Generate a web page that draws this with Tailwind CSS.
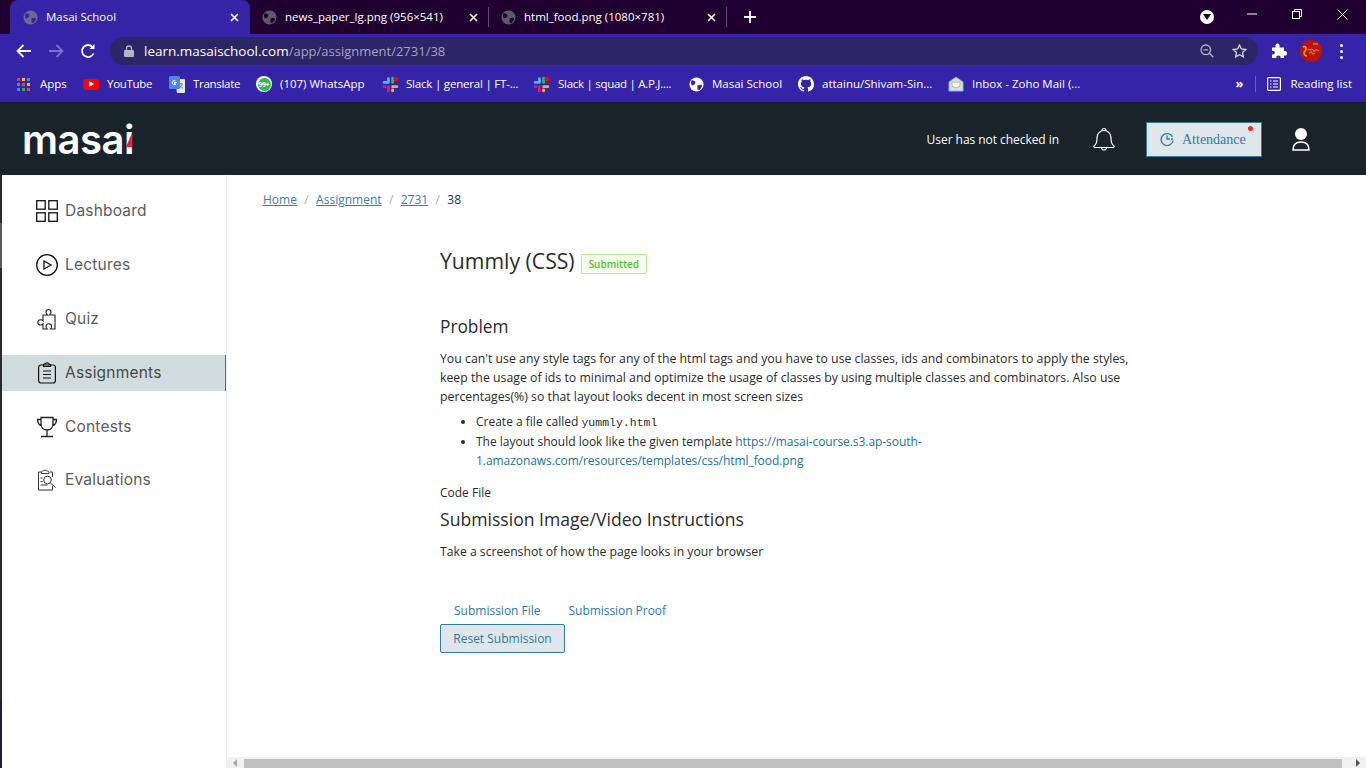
<!DOCTYPE html>
<html lang="en">
<head>
    <meta charset="UTF-8">
    <title>Masai School</title>
    <script src="https://cdn.jsdelivr.net/npm/@tailwindcss/browser@4"></script>
</head>
<body class="w-[1366px] h-[768px] overflow-hidden bg-white font-['Open_Sans',sans-serif]">
    <!-- tab strip -->
    <div class="h-[34px] bg-[#1f0030] flex items-end pl-[10px] text-white text-[11.5px]">
        <div class="w-[240px] h-[34px] bg-[#3624a8] rounded-t-[8px] flex items-center pl-[13px] pr-[11px]">
            <svg class="w-[15px] h-[15px] shrink-0" viewBox="0 0 16 16"><circle cx="8" cy="8" r="7.5" fill="#6f6a8f"/><path d="M3 3l4 2-1 3-3 1-1-3zM9 9l4-1 1 2-3 4-2-1z" fill="#3624a8"/></svg>
            <span class="ml-[8px] flex-1">Masai School</span>
            <svg class="w-[9px] h-[9px]" viewBox="0 0 9 9"><path d="M1 1l7 7M8 1L1 8" stroke="#fff" stroke-width="1.6"/></svg>
        </div>
        <div class="w-[239px] h-[34px] flex items-center pl-[12px] pr-[11px] relative">
            <svg class="w-[15px] h-[15px] shrink-0" viewBox="0 0 16 16"><circle cx="8" cy="8" r="7.5" fill="#5f5a68"/><path d="M3 3l4 2-1 3-3 1-1-3zM9 9l4-1 1 2-3 4-2-1z" fill="#1f0030"/></svg>
            <span class="ml-[8px] flex-1">news_paper_lg.png (956×541)</span>
            <svg class="w-[9px] h-[9px]" viewBox="0 0 9 9"><path d="M1 1l7 7M8 1L1 8" stroke="#fff" stroke-width="1.6"/></svg>
            <div class="absolute right-0 top-[7px] w-px h-[20px] bg-[#5d4f6b]"></div>
        </div>
        <div class="w-[238px] h-[34px] flex items-center pl-[12px] pr-[11px] relative">
            <svg class="w-[15px] h-[15px] shrink-0" viewBox="0 0 16 16"><circle cx="8" cy="8" r="7.5" fill="#5f5a68"/><path d="M3 3l4 2-1 3-3 1-1-3zM9 9l4-1 1 2-3 4-2-1z" fill="#1f0030"/></svg>
            <span class="ml-[8px] flex-1">html_food.png (1080×781)</span>
            <svg class="w-[9px] h-[9px]" viewBox="0 0 9 9"><path d="M1 1l7 7M8 1L1 8" stroke="#fff" stroke-width="1.6"/></svg>
            <div class="absolute right-0 top-[7px] w-px h-[20px] bg-[#5d4f6b]"></div>
        </div>
        <svg class="w-[12px] h-[12px] ml-[17px] mb-[11px]" viewBox="0 0 12 12"><path d="M6 0v12M0 6h12" stroke="#fff" stroke-width="1.8"/></svg>
        <div class="ml-auto flex items-center h-[34px]">
            <div class="w-[14px] h-[14px] rounded-full bg-white flex items-center justify-center">
                <svg class="w-[8px] h-[6px]" viewBox="0 0 8 6"><path d="M0 0h8L4 6z" fill="#1f0030"/></svg>
            </div>
            <svg class="w-[10px] h-[2px] ml-[33px] mb-[6px]" viewBox="0 0 10 2"><path d="M0 1h10" stroke="#fff"/></svg>
            <svg class="w-[10px] h-[10px] ml-[35px] mb-[6px]" viewBox="0 0 10 10" fill="none" stroke="#fff"><rect x=".5" y="2.5" width="7" height="7"/><path d="M2.500 2.500V.5h7v7H7.500"/></svg>
            <svg class="w-[11px] h-[11px] ml-[35px] mr-[18px] mb-[6px]" viewBox="0 0 11 11"><path d="M.5.5l10 10M10.500.5l-10 10" stroke="#fff"/></svg>
        </div>
    </div>

    <!-- toolbar -->
    <div class="h-[34px] bg-[#3624a8] flex items-center text-white">
        <svg class="w-[16px] h-[14px] ml-[16px]" viewBox="0 0 16 14" fill="none" stroke="#fff" stroke-width="1.8"><path d="M15 7H2M7.500 1L1.500 7l6 6"/></svg>
        <svg class="w-[16px] h-[14px] ml-[16px]" viewBox="0 0 16 14" fill="none" stroke="#7d72c8" stroke-width="1.8"><path d="M1 7h13M8.500 1l6 6-6 6"/></svg>
        <svg class="w-[16px] h-[16px] ml-[16px]" viewBox="0 0 16 16" fill="none" stroke="#fff" stroke-width="1.8"><path d="M13.500 10.500A6 6 0 1 1 12.500 4"/><path d="M14.500 1v5h-5" fill="#fff" stroke="none"/></svg>
        <div class="ml-[14px] w-[1148px] h-[28px] rounded-full bg-[#2c2566] flex items-center pl-[14px] pr-[11px] text-[13.5px]">
            <svg class="w-[10px] h-[12px]" viewBox="0 0 10 12"><path d="M2.500 5V3.500a2.500 2.500 0 0 1 5 0V5" fill="none" stroke="#b5b2c9" stroke-width="1.3"/><rect y="5" width="10" height="7" rx="1" fill="#b5b2c9"/></svg>
            <span class="ml-[10px] flex-1">learn.masaischool.com<span class="text-[#a8a4c0] text-[13px]">/app/assignment/2731/38</span></span>
            <svg class="w-[14px] h-[14px]" viewBox="0 0 14 14" fill="none" stroke="#b5b2c9" stroke-width="1.3"><circle cx="5.800" cy="5.800" r="4.800"/><path d="M9.300 9.300l4 4M3.500 5.800h4.600"/></svg>
            <svg class="w-[15px] h-[14px] ml-[18px]" viewBox="0 0 15 14" fill="none" stroke="#d5d3e3" stroke-width="1.3"><path d="M7.500 1l1.900 4 4.400.5-3.300 3 .9 4.400-3.900-2.200-3.900 2.200.9-4.400-3.300-3L5.600 5z"/></svg>
        </div>
        <svg class="w-[16px] h-[16px] ml-[13px]" viewBox="0 0 16 16" fill="#fff"><path d="M1 4.500h3.500C4 1.500 5 .5 6.500.5S9 1.500 8.500 4.500H13V8c2.500-.5 3 .8 3 2.200s-.5 2.800-3 2.300V15H9.500c.5-2-.7-2.600-2-2.600s-2.500.6-2 2.600H1v-3.500c2 .5 2.700-.6 2.700-1.800S3 7.500 1 8z"/></svg>
        <svg class="w-[22px] h-[22px] ml-[13px]" viewBox="0 0 22 22"><circle cx="11" cy="11" r="11" fill="#b81408"/><path d="M3 7c2-1 3 0 3 2s-2 2-2 4 2 3 3 3" fill="none" stroke="#e8a11f" stroke-width="1.600"/><path d="M8 9l2 1 2-1 2 2 3-1 2 1M9 13l2-1 2 2 2-1" fill="none" stroke="#e0772c" stroke-width="1.300"/><path d="M13 4h5" stroke="#d8b04a" stroke-width="1"/></svg>
        <div class="ml-[18px] flex flex-col gap-[3px]">
            <div class="w-[3px] h-[3px] rounded-full bg-white"></div>
            <div class="w-[3px] h-[3px] rounded-full bg-white"></div>
            <div class="w-[3px] h-[3px] rounded-full bg-white"></div>
        </div>
    </div>

    <!-- bookmarks -->
    <div class="h-[34px] pb-[2px] bg-[#3624a8] flex items-center text-white text-[11.5px] pl-[17px] whitespace-nowrap">
        <div class="w-[13px] shrink-0 grid grid-cols-3 gap-[2px]">
            <i class="h-[3px] bg-[#ea4335]"></i><i class="h-[3px] bg-[#fbbc05]"></i><i class="h-[3px] bg-[#4285f4]"></i>
            <i class="h-[3px] bg-[#34a853]"></i><i class="h-[3px] bg-[#ea4335]"></i><i class="h-[3px] bg-[#fbbc05]"></i>
            <i class="h-[3px] bg-[#4285f4]"></i><i class="h-[3px] bg-[#34a853]"></i><i class="h-[3px] bg-[#ea4335]"></i>
        </div>
        <span class="ml-[10px] w-[43px]">Apps</span>
        <div class="w-[16px] h-[11px] shrink-0 rounded-[3px] bg-[#f00] flex items-center justify-center"><div class="w-0 h-0 border-y-[3px] border-y-transparent border-l-[5px] border-l-white"></div></div>
        <span class="ml-[8px] w-[62px] tracking-[-0.3px]">YouTube</span>
        <svg class="w-[16px] h-[17px] shrink-0" viewBox="0 0 16 17"><path d="M6 3h9a1 1 0 0 1 1 1v12a1 1 0 0 1-1 1H8z" fill="#e6e6e6"/><rect width="11" height="13" rx="1.500" fill="#4f86ec"/><path d="M8 6.500H5.500v1.300H7A2 2 0 1 1 6.500 5" fill="none" stroke="#fff" stroke-width="1"/><path d="M10 8h4M12 7v1M13 8c-.3 2-1.500 3.500-3 4M11 9.500c.5 1 1.500 2 3 2.500" fill="none" stroke="#7a7a7a" stroke-width=".9"/></svg>
        <span class="ml-[8px] w-[63px] tracking-[-0.3px]">Translate</span>
        <div class="relative w-[16px] h-[16px] shrink-0 rounded-full bg-white flex items-center justify-center">
            <div class="w-[13px] h-[13px] rounded-full bg-[#2eb84c] text-white text-[6.5px] font-bold leading-[13px] text-center">99+</div>
        </div>
        <span class="ml-[8px] w-[102px]">(107) WhatsApp</span>
        <svg class="w-[17px] h-[17px] shrink-0" viewBox="0 0 16 16" fill="none" stroke-width="2.600" stroke-linecap="round"><path d="M6 2.500v3.500M2 6h4" stroke="#36c5f0"/><path d="M10 2v4" stroke="#2eb67d"/><path d="M14 10h-4" stroke="#ecb22e"/><path d="M10 14v-1" stroke="#ecb22e"/><path d="M6 10v4M2 10h1" stroke="#e01e5a"/><circle cx="13" cy="3" r="2.200" fill="#f00" stroke="none"/></svg>
        <span class="ml-[7px] w-[127px] tracking-[-0.2px]">Slack | general | FT-...</span>
        <svg class="w-[17px] h-[17px] shrink-0" viewBox="0 0 16 16" fill="none" stroke-width="2.600" stroke-linecap="round"><path d="M6 2.500v3.500M2 6h4" stroke="#36c5f0"/><path d="M10 2v4" stroke="#2eb67d"/><path d="M14 10h-4" stroke="#ecb22e"/><path d="M10 14v-1" stroke="#ecb22e"/><path d="M6 10v4M2 10h1" stroke="#e01e5a"/><circle cx="13" cy="3" r="2.200" fill="#f00" stroke="none"/></svg>
        <span class="ml-[8px] w-[131px] tracking-[-0.28px]">Slack | squad | A.P.J....</span>
        <svg class="w-[15px] h-[15px] shrink-0" viewBox="0 0 16 16"><circle cx="8" cy="8" r="7.500" fill="#fff"/><path d="M3 3l4 2-1 3-3 1-1-3zM9 9l4-1 1 2-3 4-2-1z" fill="#3624a8"/></svg>
        <span class="ml-[8px] w-[86px]">Masai School</span>
        <svg class="w-[16px] h-[16px] shrink-0" viewBox="0 0 16 16" fill="#fff"><path d="M8 0C3.580 0 0 3.580 0 8c0 3.540 2.290 6.530 5.470 7.590.4.070.55-.17.55-.38 0-.19-.01-.82-.01-1.490-2.010.37-2.530-.49-2.690-.94-.09-.23-.48-.94-.82-1.130-.28-.15-.68-.52-.01-.53.63-.01 1.080.58 1.230.82.72 1.210 1.870.87 2.330.66.070-.52.28-.87.51-1.070-1.780-.2-3.640-.89-3.640-3.950 0-.87.31-1.590.82-2.150-.08-.2-.36-1.020.08-2.120 0 0 .67-.21 2.200.82.64-.18 1.320-.27 2-.27s1.360.09 2 .27c1.530-1.040 2.200-.82 2.200-.82.44 1.100.16 1.920.08 2.120.51.56.82 1.270.82 2.150 0 3.070-1.870 3.750-3.650 3.950.29.25.54.73.54 1.480 0 1.070-.01 1.930-.01 2.200 0 .21.15.46.55.38A8.010 8.010 0 0 0 16 8c0-4.420-3.580-8-8-8z"/></svg>
        <span class="ml-[8px] w-[126px]">attainu/Shivam-Sin...</span>
        <svg class="w-[16px] h-[16px] shrink-0" viewBox="0 0 16 16"><path d="M1 6l7-5 7 5v9H1z" fill="#cfe4f5" stroke="#7fb3dc"/><path d="M4 6h8v4l-4 2-4-2z" fill="#fff" stroke="#f0a63c"/></svg>
        <span class="ml-[8px]">Inbox - Zoho Mail (...</span>
        <span class="ml-auto text-[13px] font-bold leading-none mb-[2px]">»</span>
        <div class="w-px h-[16px] bg-[#6a5cc0] ml-[12px]"></div>
        <svg class="w-[14px] h-[14px] ml-[11px]" viewBox="0 0 14 14" fill="none" stroke="#fff" stroke-width="1.200"><rect x=".6" y=".6" width="12.800" height="12.800" rx="1"/><path d="M3 4h1.500M6 4h5M3 7h1.500M6 7h5M3 10h1.500M6 10h5"/></svg>
        <span class="ml-[9px] mr-[14px]">Reading list</span>
    </div>

    <div class="h-px bg-[#1d1a3a]"></div>

    <!-- site header -->
    <header class="h-[72px] bg-[#18232a] flex items-center pl-[22px] text-white">
        <div class="relative font-['Inter',sans-serif] font-semibold text-[40px] leading-none tracking-[-0.5px] mt-[2px]">masai<span class="absolute right-[2px] bottom-[5px] w-[6px] h-[22px] bg-[#e8222e] [clip-path:polygon(100%_0,100%_65%,0_65%)]"></span></div>
        <span class="ml-auto mt-[1px] text-[12px] tracking-[-0.05px]">User has not checked in</span>
        <svg class="w-[24px] h-[25px] ml-[33px]" viewBox="0 0 24 25" fill="none" stroke="#fff" stroke-width="1.200"><path d="M2 19c2-2 3-3 3-8 0-4.500 3-7.500 7-7.500s7 3 7 7.500c0 5 1 6 3 8 .5 1-.2 1.500-1 1.500H3c-.8 0-1.500-.5-1-1.500z"/><path d="M10 3.500a2 2 0 0 1 4 0M9.500 20.500a2.500 2.500 0 0 0 5 0"/></svg>
        <div class="relative ml-[30px] w-[116px] h-[35px] bg-[#dfe7ed] border border-[#337ba5] flex items-center pl-[13px] font-['Liberation_Serif',serif] text-[14px] text-[#2f7aa5]">
            <svg class="w-[14px] h-[14px]" viewBox="0 0 14 14" fill="none" stroke="#2f7aa5" stroke-width="1.300"><path d="M12.500 5A6 6 0 1 0 13 8.500M7 3.500V7h3M11 7h2"/></svg>
            <span class="ml-[8px]">Attendance</span>
            <div class="absolute top-[3px] right-[8px] w-[5px] h-[5px] rounded-full bg-[#e8262e]"></div>
        </div>
        <svg class="w-[18px] h-[23px] ml-[30px]" viewBox="0 0 18 23"><circle cx="9" cy="6" r="6" fill="#fff"/><path d="M1 22c0-5 3-8 8-8s8 3 8 8z" fill="none" stroke="#fff" stroke-width="1.500"/></svg>
        <div class="w-[56px]"></div>
    </header>

    <div class="relative h-[593px] flex">
        <!-- window edge showing through on the left -->
        <div class="w-[2px] flex flex-col">
            <div class="h-[48px] bg-[#2b2b2e]"></div>
            <div class="h-[45px] bg-[#5c5c5c]"></div>
            <div class="h-[432px] bg-[#2b2b2e]"></div>
            <div class="flex-1 bg-[#1f1c3d]"></div>
        </div>

        <!-- sidebar -->
        <aside class="w-[225px] border-r border-[#eceef5] pt-[18px] font-['Inter',sans-serif] text-[15.500px] text-[#5c5c5c] tracking-[0.2px]">
            <div class="h-[36px] flex items-center pl-[34px] gap-[7px]">
                <svg class="w-[22px] h-[22px]" viewBox="0 0 22 22" fill="none" stroke="#111" stroke-width="1.300"><rect x=".7" y=".7" width="8.500" height="8.500"/><rect x="12.800" y=".7" width="8.500" height="8.500"/><rect x=".7" y="12.800" width="8.500" height="8.500"/><rect x="12.800" y="12.800" width="8.500" height="8.500"/></svg>
                <span>Dashboard</span>
            </div>
            <div class="mt-[18px] h-[36px] flex items-center pl-[34px] gap-[7px]">
                <svg class="w-[22px] h-[22px]" viewBox="0 0 22 22" fill="none" stroke="#111" stroke-width="1.300"><circle cx="11" cy="11" r="10.300"/><path d="M8 7l7 4-7 4z"/></svg>
                <span>Lectures</span>
            </div>
            <div class="mt-[18px] h-[36px] flex items-center pl-[34px] gap-[7px]">
                <svg class="w-[22px] h-[22px]" viewBox="0 0 22 22" fill="none" stroke="#222" stroke-width="1.100"><path d="M7 7h4.500c-1-1-1.500-1.500-1.500-3a2.500 2.500 0 0 1 5 0c0 1.500-.5 2-1.500 3H19v14h-4.500c1-1 1-1.500 1-2.500a2.700 2.700 0 0 0-5.400 0c0 1 0 1.500 1 2.500H7v-5c-1 1-1.500 1-2.500 1a2.600 2.600 0 0 1 0-5.200c1 0 1.500 0 2.500 1z"/></svg>
                <span>Quiz</span>
            </div>
            <div class="mt-[18px] h-[36px] flex items-center pl-[34px] gap-[7px] bg-[#d0dcde] border-r border-[#337ba5] text-[#484848]">
                <svg class="w-[22px] h-[22px]" viewBox="0 0 22 22" fill="none" stroke="#111" stroke-width="1.200"><rect x="2.600" y="3" width="16.800" height="18" rx="2.500"/><path d="M7.500 3c0-1 1-1 1.500-1 .5-1.500 3.500-1.500 4 0 .5 0 1.500 0 1.500 1v1.500h-7zM7 9h8M7 12.500h8M7 16h8"/></svg>
                <span>Assignments</span>
            </div>
            <div class="mt-[18px] h-[36px] flex items-center pl-[34px] gap-[7px]">
                <svg class="w-[22px] h-[22px]" viewBox="0 0 22 22" fill="none" stroke="#222" stroke-width="1.300"><path d="M5 1.500h12v6c0 4-2.500 6.500-6 6.500S5 11.500 5 7.500zM5 3.500H1.500c0 3.500 1 5.500 4.500 6.500M17 3.500h3.500c0 3.500-1 5.500-4.500 6.500M11 14v6M5 20.500h12"/></svg>
                <span>Contests</span>
            </div>
            <div class="mt-[17px] h-[36px] flex items-center pl-[34px] gap-[7px]">
                <svg class="w-[22px] h-[22px]" viewBox="0 0 22 22" fill="none" stroke="#333" stroke-width="1"><path d="M5.500 3H2.500v18h14v-4M14 3h2.500v5M5.500 3c0-1 1-1 2-1 .5-1.300 2.500-1.300 3 0 1 0 2 0 2.500 1v1.500H5.500z"/><circle cx="11.500" cy="11" r="3.800"/><path d="M14.500 14l5 4.500M4.500 9h2M4.500 12.500h2M4.500 16h7"/></svg>
                <span>Evaluations</span>
            </div>
        </aside>

        <!-- main content -->
        <main class="flex-1 text-[12px] leading-[19.500px] text-[#2b2b2b]">
            <nav class="pl-[36px] pt-[15px] flex items-center text-[#3d7ea6]">
                <a class="underline">Home</a><span class="mx-[7.400px] text-[#aaa]">/</span>
                <a class="underline">Assignment</a><span class="mx-[7.400px] text-[#aaa]">/</span>
                <a class="underline">2731</a><span class="mx-[7.400px] text-[#aaa]">/</span>
                <span class="text-[#333]">38</span>
            </nav>
            <div class="ml-[213px] w-[700px]">
                <div class="mt-[35px] flex items-center h-[32px]">
                    <h1 class="text-[21.200px] leading-[32px]">Yummly (CSS)</h1>
                    <span class="ml-[6px] mt-[7px] h-[20px] px-[7px] border border-[#b7eb8f] bg-[#f6ffed] text-[#52c41a] text-[10px] font-semibold leading-[18px] rounded-[1px]">Submitted</span>
                </div>
                <h2 class="mt-[38px] text-[17.3px] leading-[24px]">Problem</h2>
                <p class="mt-[10px] text-[12.300px] leading-[19px]">You can't use any style tags for any of the html tags and you have to use classes, ids and combinators to apply the styles, keep the usage of ids to minimal and optimize the usage of classes by using multiple classes and combinators. Also use percentages(%) so that layout looks decent in most screen sizes</p>
                <ul class="mt-[6.500px] list-disc pl-[36px] w-[520px]">
                    <li>Create a file called <code class="font-['Liberation_Mono',monospace] text-[11.500px] leading-none">yummly.html</code></li>
                    <li>The layout should look like the given template <a class="text-[#22729e] tracking-[-0.06px]">https://masai-course.s3.ap-south-1.amazonaws.com/resources/templates/css/html_food.png</a></li>
                </ul>
                <p class="mt-[12px]">Code File</p>
                <h2 class="mt-[5px] text-[17.6px] leading-[24px]">Submission Image/Video Instructions</h2>
                <p class="mt-[11px] text-[12.200px]">Take a screenshot of how the page looks in your browser</p>
                <div class="mt-[39px] pl-[14px] flex gap-[28px] text-[#2f7aa5]">
                    <span>Submission File</span>
                    <span class="tracking-[-0.05px]">Submission Proof</span>
                </div>
                <button class="mt-[4px] block w-[125px] h-[29px] pt-[1px] bg-[#dfe7ed] border border-[#337ba5] rounded-[2px] text-[#2f7aa5] text-[12px]">Reset Submission</button>
            </div>
        </main>

        <!-- horizontal scrollbar -->
        <div class="absolute left-[227px] right-0 bottom-0 h-[11px] bg-[#f1f1f1] flex items-end">
            <div class="w-0 h-0 ml-[6px] mb-[1px] border-y-[4px] border-y-transparent border-r-[4px] border-r-[#a3a3a3]"></div>
            <div class="ml-[7px] w-[1098px] h-[9px] bg-[#c1c1c1]"></div>
            <div class="w-0 h-0 ml-[14px] mb-[1px] border-y-[4px] border-y-transparent border-l-[4px] border-l-[#505050]"></div>
        </div>
    </div>
</body>
</html>
